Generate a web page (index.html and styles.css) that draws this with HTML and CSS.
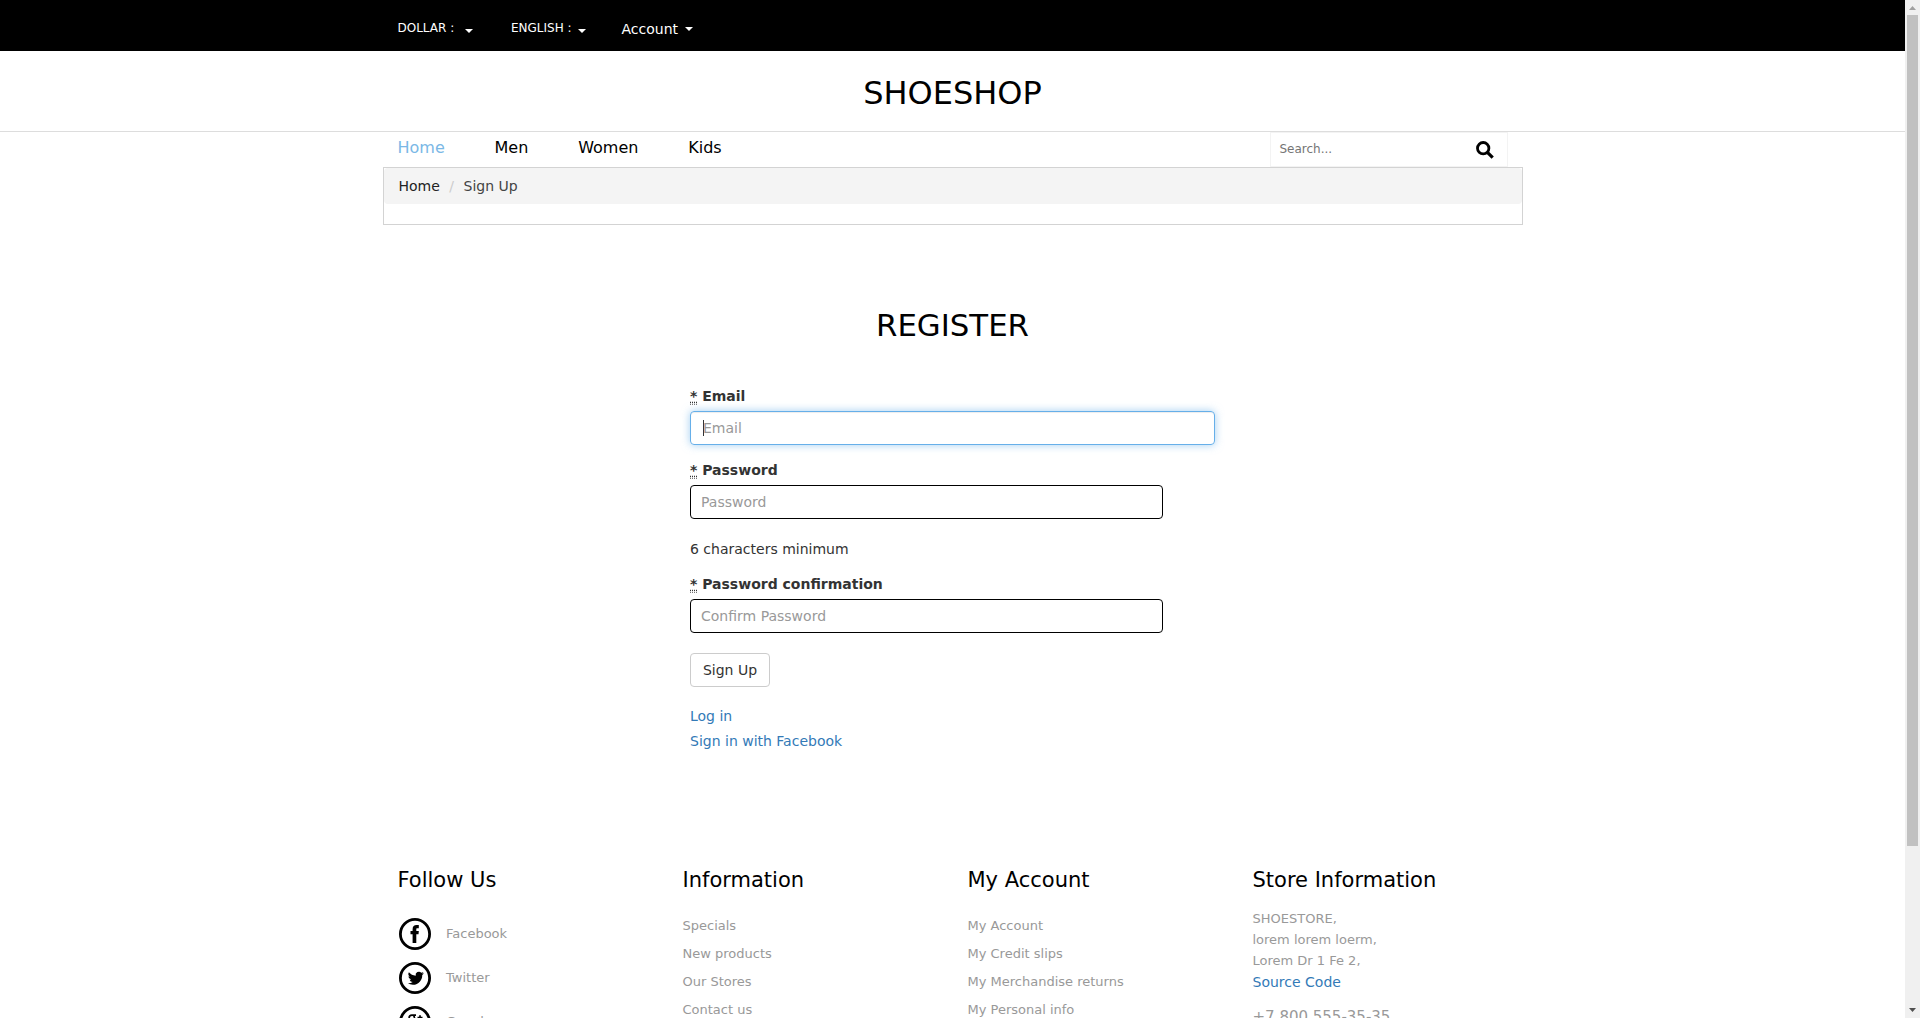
FILE: index.html
```html
<!DOCTYPE html>
<html lang="en">
<head>
<meta charset="utf-8">
<title>Shoeshop</title>
<link rel="stylesheet" href="styles.css">
</head>
<body>
<div class="window">
<div class="page">
  <div class="topbar"><div class="container topbar-row">
    <span class="drop small currency">DOLLAR : <i class="caret"></i></span>
    <span class="drop small language">ENGLISH : <i class="caret"></i></span>
    <span class="drop account">Account <i class="caret"></i></span>
  </div></div>
  <header class="logo">SHOESHOP</header>
  <div class="container nav-row">
    <nav class="nav">
      <a class="active">Home</a><a>Men</a><a>Women</a><a>Kids</a>
    </nav>
    <div class="search">
      <span>Search...</span>
      <svg width="18" height="18" viewBox="0 0 18 18"><circle cx="7.2" cy="7.2" r="5.7" fill="none" stroke="#000" stroke-width="2.8"/><path d="M11.4 11.4l5.3 5.3" stroke="#000" stroke-width="3.2"/></svg>
    </div>
  </div>
  <div class="crumb-box"><ol class="crumbs"><li>Home</li><li class="current">Sign Up</li></ol></div>
  <h1 class="title">REGISTER</h1>
  <form class="form">
    <label><abbr title="required">*</abbr> Email</label>
    <div class="field focused"><i class="cursor"></i>Email</div>
    <label><abbr title="required">*</abbr> Password</label>
    <div class="field">Password</div>
    <p class="hint">6 characters minimum</p>
    <label><abbr title="required">*</abbr> Password confirmation</label>
    <div class="field">Confirm Password</div>
    <button type="button" class="submit">Sign Up</button>
    <a class="link">Log in</a>
    <a class="link">Sign in with Facebook</a>
  </form>
  <footer class="container footer">
    <section>
      <h3>Follow Us</h3>
      <ul class="social">
        <li><svg width="34" height="34" viewBox="0.5 0 34 34"><circle cx="17.5" cy="17" r="14.6" fill="none" stroke="#000" stroke-width="2.8"/><path d="M15.1 26v-8.7h-2.1v-3.3h2.1v-1.8c0-3 1.500-4.200 4-4.200h2.200v3.200h-1.400c-1 0-1.100.5-1.100 1.200v1.600h2.500l-.3 3.300h-2.200v8.700z"/></svg>Facebook</li>
        <li><svg width="34" height="34" viewBox="0.5 0 34 34"><circle cx="17.5" cy="17" r="14.6" fill="none" stroke="#000" stroke-width="2.8"/><path transform="translate(10.3 9.2) scale(.67)" d="M23.950 4.570a10 10 0 0 1-2.820.77 4.960 4.960 0 0 0 2.160-2.720c-.950.550-2 .950-3.130 1.180a4.920 4.920 0 0 0-8.380 4.480C7.690 8.100 4.070 6.130 1.640 3.160a4.920 4.920 0 0 0 1.520 6.570 4.900 4.900 0 0 1-2.230-.61v.06a4.920 4.920 0 0 0 3.950 4.830 5 5 0 0 1-2.210.080 4.940 4.940 0 0 0 4.600 3.420A9.870 9.870 0 0 1 0 19.540a13.990 13.990 0 0 0 7.550 2.210c9.050 0 14-7.500 14-13.980 0-.210 0-.420-.020-.630a9.940 9.940 0 0 0 2.460-2.550z"/></svg>Twitter</li>
        <li><svg width="34" height="34" viewBox="0.5 0 34 34"><circle cx="17.5" cy="17" r="14.6" fill="none" stroke="#000" stroke-width="2.8"/><path d="M18.500 10.200h-4c-2 0-2.900 1.300-2.900 2.700s1.100 2.600 2.700 2.600 2.700-1.200 2.700-2.600-.9-2.400-1.500-2.700M14.500 15.700c-1 1.200 3.300 2 3.300 4.500 0 3.500-7 3.300-7 .4 0-1.800 2-2.600 4.500-2.600M22.500 10.300v5M20 12.700h5" fill="none" stroke="#000" stroke-width="1.7"/></svg>Google</li>
      </ul>
    </section>
    <section>
      <h3>Information</h3>
      <ul class="links"><li>Specials</li><li>New products</li><li>Our Stores</li><li>Contact us</li></ul>
    </section>
    <section>
      <h3>My Account</h3>
      <ul class="links"><li>My Account</li><li>My Credit slips</li><li>My Merchandise returns</li><li>My Personal info</li></ul>
    </section>
    <section>
      <h3>Store Information</h3>
      <div class="address">SHOESTORE,<br>lorem lorem loerm,<br>Lorem Dr 1 Fe 2,<br><a>Source Code</a></div>
      <div class="phone">+7 800 555-35-35</div>
    </section>
  </footer>
</div>
<div class="scrollbar"><svg width="15" height="15" viewBox="0 0 15 15"><path d="M7.5 6l3.5 4H4z" fill="#a0a0a0"/></svg><div class="thumb"></div><svg class="down" width="15" height="15" viewBox="0 0 15 15"><path d="M4 5h7L7.5 9z" fill="#505050"/></svg></div>
</div>
</body>
</html>
```
FILE: styles.css
```css
* { box-sizing: border-box; }
body { margin: 0; overflow: hidden; background: #fff; color: #333; font: 14px/20px "DejaVu Sans", sans-serif; }
ul, ol { list-style: none; margin: 0; padding: 0; }
.window { display: flex; height: 1018px; overflow: hidden; }
.page { width: 1905px; flex: none; }
.container { width: 1140px; margin: 0 auto; padding: 0 15px; }
.topbar { height: 51px; background: #000; color: #fff; }
.topbar-row { display: flex; padding-top: 19px; }
.drop { display: flex; align-items: center; height: 20px; white-space: nowrap; }
.small { font-size: 12px; align-items: flex-start; line-height: 18px; }
.caret { border: 4px solid transparent; border-top-color: #fff; border-bottom: 0; margin-left: 7px; }
.small .caret { margin-top: 10px; margin-left: 11px; }
.currency { width: 113.5px; }
.language { width: 110.5px; }
.language .caret { margin-left: 6.5px; }
.logo { height: 81px; border-bottom: 1px solid #ddd; text-align: center; font-size: 32px; line-height: 85px; color: #000; }
.nav-row { display: flex; justify-content: space-between; height: 35px; }
.nav { display: flex; gap: 49.8px; padding-top: 1px; font-size: 16px; line-height: 30px; color: #000; }
.nav .active { color: #7ab8e6; }
.search { display: flex; justify-content: space-between; width: 238px; height: 35px; border: 1px solid #f3f3f3; padding: 8px 13px 0 9px; font-size: 12px; line-height: 16px; color: #757575; }
.crumb-box { width: 1140px; height: 58px; margin: 0 auto; border: 1px solid #d3d3d3; }
.crumbs { display: flex; height: 36px; padding: 8px 15px; background: #f4f4f4; border-radius: 4px; color: #222; }
.crumbs .current { color: #444; }
.crumbs .current::before { content: "/"; color: #ccc; padding: 0 9.5px; }
.title { margin: 82px 0 0; height: 36px; text-align: center; font-weight: 400; font-size: 30.8px; line-height: 36px; color: #000; }
.form { display: flex; flex-direction: column; align-items: flex-start; width: 525px; margin: 43px auto 0; }
.form label { font-weight: 700; margin-bottom: 5px; }
abbr { border-bottom: 1px dotted #777; }
.field { display: flex; width: 90%; height: 34px; border: 1px solid #000; border-radius: 4px; padding: 6px 10px; color: #999; margin-bottom: 15px; }
.focused { width: 100%; padding-left: 12px; border-color: #66afe9; box-shadow: inset 0 1px 1px rgba(0,0,0,.075), 0 0 8px rgba(102,175,233,.6); }
.cursor { width: 1px; height: 16px; margin: 2px -1px 0 0; background: #333; }
.hint { margin: 5px 0 15px; }
.submit { width: 80px; height: 34px; margin: 5px 0 19px; padding: 0; border: 1px solid #ccc; border-radius: 4px; background: #fff; color: #333; font: inherit; }
.link { height: 25px; }
a.link, .address a { color: #337ab7; }
.footer { display: grid; grid-template-columns: repeat(4, 285px); margin-top: 112px; }
.footer h3 { margin: 0; font-size: 21px; font-weight: 400; line-height: 24px; color: #000; }
.footer section { color: #999; font-size: 13px; }
.social { padding-top: 25px; }
.social li { display: flex; gap: 14.5px; height: 44px; line-height: 33px; }
.links { padding-top: 24px; }
.links li { height: 28px; line-height: 20px; }
.address { padding-top: 16px; line-height: 21px; }
.address a { display: block; padding-top: 1px; font-size: 14px; }
.phone { padding-top: 14px; font-size: 15px; line-height: 20px; }
.scrollbar { width: 15px; display: flex; flex-direction: column; background: #f0f0f0; }
.thumb { width: 11px; height: 831px; margin-left: 2px; background: #c1c1c1; }
.down { margin-top: auto; }
```
